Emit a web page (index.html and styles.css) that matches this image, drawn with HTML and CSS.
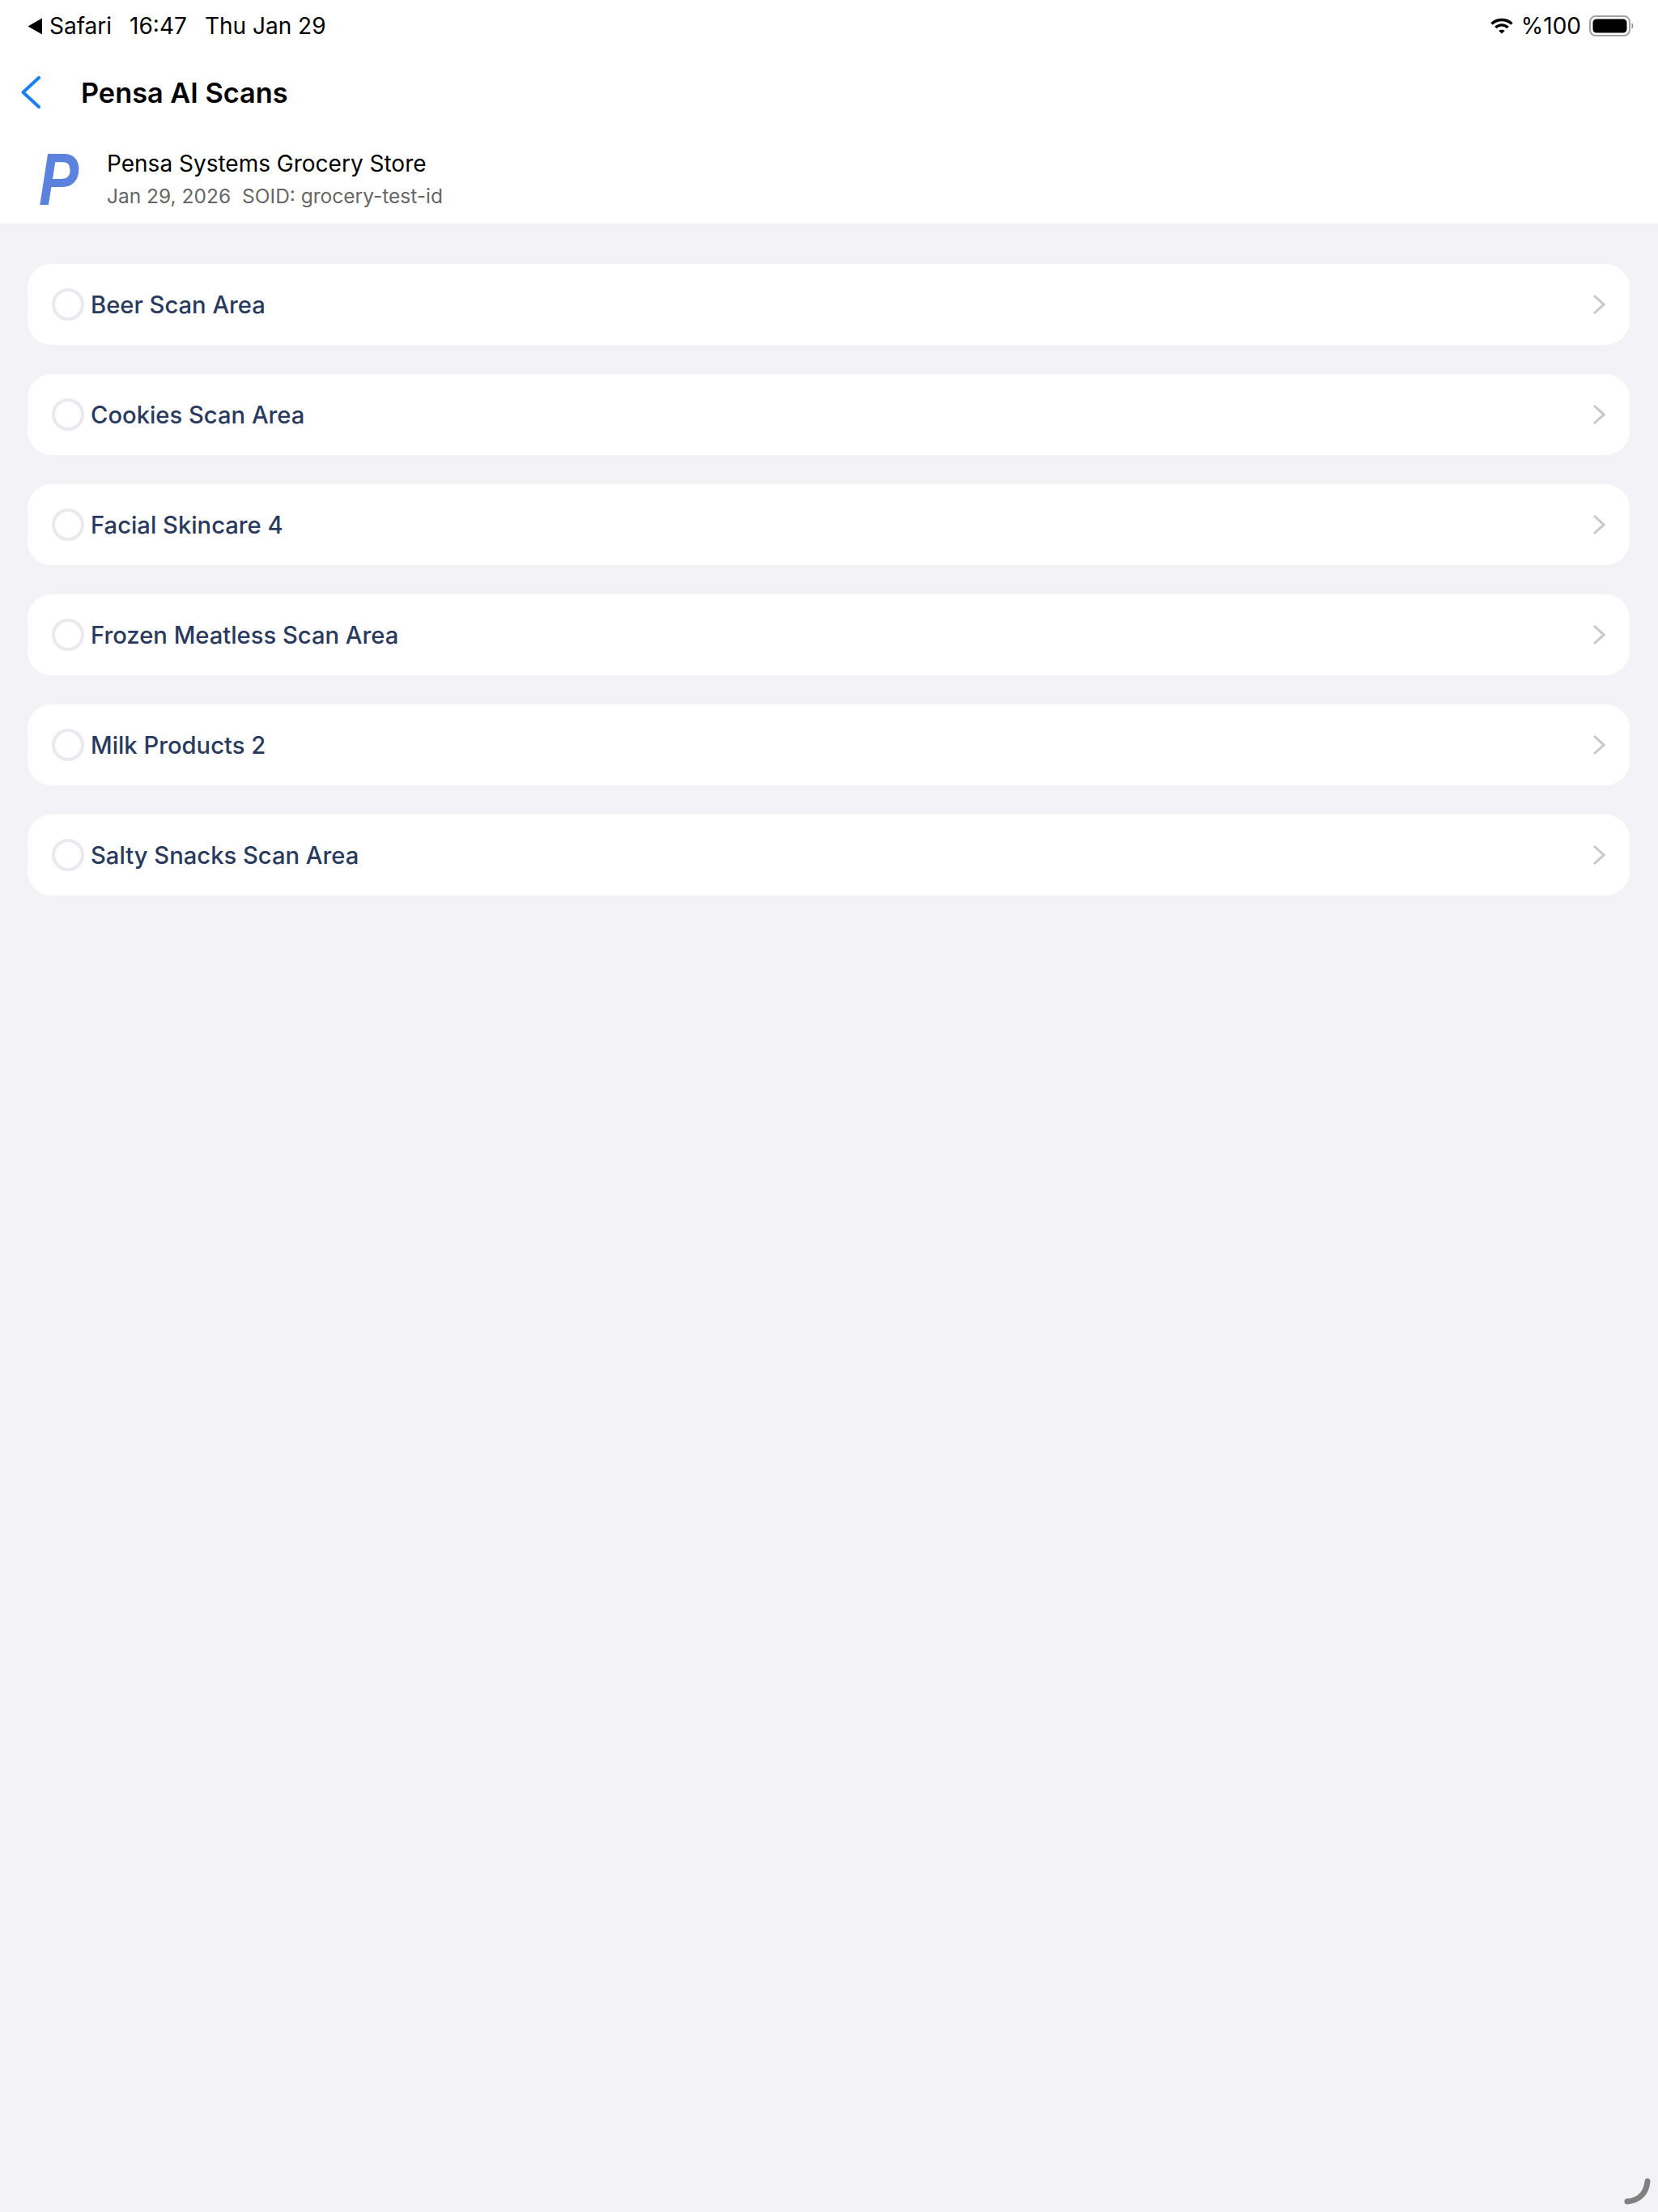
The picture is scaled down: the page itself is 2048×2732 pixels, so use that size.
FILE: index.html
```html
<!DOCTYPE html>
<html lang="en">
<head>
    <meta charset="UTF-8">
    <meta name="viewport" content="width=device-width, initial-scale=1.0">
    <title>Pensa AI Scans</title>
    <link rel="stylesheet" href="styles.css">
</head>
<body>
    <header class="top">
        <div class="status-bar">
            <div class="status-left">
                <span class="safari-back">
                    <svg class="back-arrow" width="18" height="21" viewBox="0 0 18 21"><path d="M0.5 10.5 L18 0.5 V20.5 Z" fill="#000"/></svg>
                    Safari
                </span>
                <span>16:47</span>
                <span>Thu Jan 29</span>
            </div>
            <div class="status-right">
                <svg width="28" height="20" viewBox="0 0 28 20" fill="none" stroke="#000" stroke-width="3.4">
                    <path d="M1.5 7.5 C8.5 0.8 19.5 0.8 26.5 7.5"/>
                    <path d="M6.3 12 C10.8 7.8 17.2 7.8 21.7 12"/>
                    <path d="M10.2 16 L14 19.6 L17.8 16 C15.6 14.2 12.4 14.2 10.2 16 Z" fill="#000" stroke="none"/>
                </svg>
                <span class="battery-pct">%100</span>
                <svg width="56" height="26" viewBox="0 0 56 26">
                    <rect x="1" y="1" width="49" height="24" rx="7" fill="none" stroke="#a3a3a3" stroke-width="2"/>
                    <rect x="4.5" y="4.5" width="42" height="17" rx="4.5" fill="#000"/>
                    <path d="M52.5 9.5 C55 10.5 55 15.5 52.5 16.5 Z" fill="#8e8e8e"/>
                </svg>
            </div>
        </div>
        <div class="nav">
            <svg class="nav-back" width="24" height="40" viewBox="0 0 24 40" fill="none" stroke="#1a7ff2" stroke-width="4" stroke-linecap="round" stroke-linejoin="round">
                <path d="M22 2 L2.5 20 L22 38"/>
            </svg>
            <h1 class="nav-title">Pensa AI Scans</h1>
        </div>
        <div class="store">
            <div class="store-logo">P</div>
            <div>
                <div class="store-name">Pensa Systems Grocery Store</div>
                <div class="store-meta">
                    <span>Jan 29, 2026</span>
                    <span>SOID: grocery-test-id</span>
                </div>
            </div>
        </div>
    </header>

    <main class="scan-list">
        <div class="scan-row">
            <span class="scan-check"></span>
            <span class="scan-name">Beer Scan Area</span>
            <svg class="scan-chevron" width="16" height="26" viewBox="0 0 16 26" fill="none" stroke="#c7c7cc" stroke-width="3"><path d="M2 2 L14 13 L2 24"/></svg>
        </div>
        <div class="scan-row">
            <span class="scan-check"></span>
            <span class="scan-name">Cookies Scan Area</span>
            <svg class="scan-chevron" width="16" height="26" viewBox="0 0 16 26" fill="none" stroke="#c7c7cc" stroke-width="3"><path d="M2 2 L14 13 L2 24"/></svg>
        </div>
        <div class="scan-row">
            <span class="scan-check"></span>
            <span class="scan-name">Facial Skincare 4</span>
            <svg class="scan-chevron" width="16" height="26" viewBox="0 0 16 26" fill="none" stroke="#c7c7cc" stroke-width="3"><path d="M2 2 L14 13 L2 24"/></svg>
        </div>
        <div class="scan-row">
            <span class="scan-check"></span>
            <span class="scan-name">Frozen Meatless Scan Area</span>
            <svg class="scan-chevron" width="16" height="26" viewBox="0 0 16 26" fill="none" stroke="#c7c7cc" stroke-width="3"><path d="M2 2 L14 13 L2 24"/></svg>
        </div>
        <div class="scan-row">
            <span class="scan-check"></span>
            <span class="scan-name">Milk Products 2</span>
            <svg class="scan-chevron" width="16" height="26" viewBox="0 0 16 26" fill="none" stroke="#c7c7cc" stroke-width="3"><path d="M2 2 L14 13 L2 24"/></svg>
        </div>
        <div class="scan-row">
            <span class="scan-check"></span>
            <span class="scan-name">Salty Snacks Scan Area</span>
            <svg class="scan-chevron" width="16" height="26" viewBox="0 0 16 26" fill="none" stroke="#c7c7cc" stroke-width="3"><path d="M2 2 L14 13 L2 24"/></svg>
        </div>
    </main>

    <svg class="resize-handle" width="40" height="40" viewBox="0 0 40 40" fill="none" stroke="#808080" stroke-width="7" stroke-linecap="round">
        <path d="M32 5 C31 19 22 29 7 30"/>
    </svg>
</body>
</html>
```

FILE: styles.css
```css
html, body {
    margin: 0;
    height: 100%;
}
body {
    font-family: Inter, "Liberation Sans", sans-serif;
    background-color: #f2f2f7;
    overflow: hidden;
}
.top {
    background-color: #fff;
    height: 276px;
    display: flex;
    flex-direction: column;
}
.status-bar {
    height: 64px;
    display: flex;
    justify-content: space-between;
    align-items: center;
    padding: 0 29px 0 34px;
    font-size: 28px;
    color: #000;
}
.status-left {
    display: flex;
    gap: 22px;
}
.safari-back {
    display: flex;
    align-items: center;
    gap: 9px;
}
.status-right {
    display: flex;
    align-items: center;
    gap: 10px;
}
.nav {
    height: 100px;
    display: flex;
    align-items: center;
    padding-left: 26px;
    gap: 50px;
}
.nav-title {
    margin: 0;
    font-size: 34.3px;
    font-weight: 600;
    color: #000;
}
.store {
    display: flex;
    align-items: center;
    padding: 13px 0 0 48px;
    gap: 16px;
}
.store-logo {
    width: 68px;
    font-family: "Liberation Sans", sans-serif;
    font-size: 90px;
    line-height: 90px;
    font-weight: bold;
    font-style: italic;
    color: #5b82dc;
    transform: scaleX(0.82);
    transform-origin: left center;
}
.store-name {
    font-size: 28px;
    line-height: 40px;
    font-weight: 400;
    color: #000;
}
.store-meta {
    display: flex;
    gap: 14px;
    font-size: 24.5px;
    line-height: 40px;
    color: #666;
}
.scan-list {
    display: flex;
    flex-direction: column;
    gap: 36px;
    padding: 50px 35px 0 34px;
}
.scan-row {
    height: 100px;
    display: flex;
    align-items: center;
    background-color: #fff;
    border-radius: 30px;
    padding: 0 30px;
    gap: 8px;
}
.scan-check {
    width: 40px;
    height: 40px;
    box-sizing: border-box;
    border: 4px solid #e9e9ee;
    border-radius: 50%;
}
.scan-name {
    flex: 1;
    font-size: 29.2px;
    font-weight: 450;
    color: #2a3a5e;
}
.resize-handle {
    position: absolute;
    right: 5px;
    bottom: 3px;
}
```
